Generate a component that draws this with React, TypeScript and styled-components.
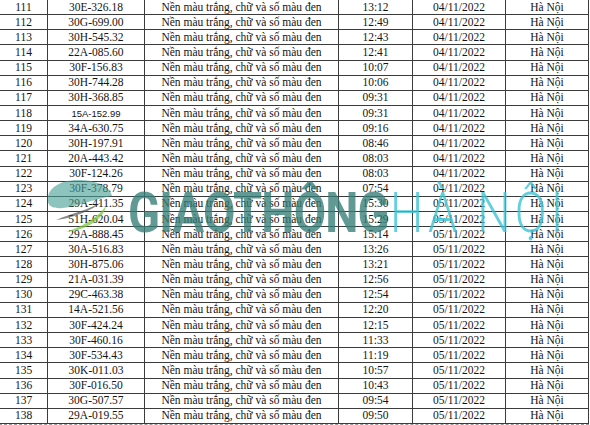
import React from "react";
import styled, { createGlobalStyle } from "styled-components";

const GlobalStyle = createGlobalStyle`
  html, body {
    margin: 0;
    padding: 0;
    background: #ffffff;
  }
  body {
    font-family: "Liberation Serif", "Times New Roman", serif;
    color: #141414;
    overflow: hidden;
  }
`;

const Page = styled.div`
  position: relative;
  width: 590px;
  height: 425px;
  overflow: hidden;
`;

const Sheet = styled.div`
  width: 589px;
  margin: -1px 0 0 -1px;
  border-right: 1px dashed #9a9a9a;
  border-bottom: 1px dashed #9a9a9a;
`;

const Table = styled.table`
  width: 589px;
  border-collapse: collapse;
  table-layout: fixed;
`;

const Row = styled.tr`
  height: 15.15px;
`;

const Cell = styled.td<{ $sans?: boolean }>`
  border: 1px solid #3b3b3b;
  padding: 0;
  text-align: center;
  vertical-align: middle;
  white-space: nowrap;
  font-size: ${(p) => (p.$sans ? "9.5px" : "11.5px")};
  font-family: ${(p) =>
    p.$sans ? '"Liberation Sans", Arial, sans-serif' : '"Liberation Serif", "Times New Roman", serif'};
  line-height: 13px;
  overflow: hidden;
`;

const Watermark = styled.div`
  position: absolute;
  left: 44px;
  top: 172px;
  display: flex;
  align-items: flex-start;
  pointer-events: none;
`;

const Logo = styled.svg`
  width: 80px;
  height: 66px;
  flex: none;
  opacity: 0.85;
`;

const Brand = styled.span`
  display: inline-block;
  margin: 8px 0 0 4px;
  white-space: nowrap;
  font-family: Roboto, "Liberation Sans", sans-serif;
  font-weight: 700;
  font-size: 56px;
  line-height: 66px;
  color: rgba(52, 125, 118, 0.78);
  transform: scaleX(0.84);
  transform-origin: left center;
  letter-spacing: -1px;
`;

const City = styled.span`
  position: absolute;
  left: 346px;
  top: 8px;
  white-space: nowrap;
  font-family: Roboto, "Liberation Sans", sans-serif;
  font-weight: 300;
  font-size: 56px;
  line-height: 66px;
  color: rgba(62, 196, 212, 0.8);
  transform: scaleX(0.84);
  transform-origin: left center;
  letter-spacing: 5px;
`;

type Plate = {
  no: number;
  plate: string;
  time: string;
  date: string;
  sans?: boolean;
};

const rows: Plate[] = [
  { no: 111, plate: "30E-326.18", time: "13:12", date: "04/11/2022" },
  { no: 112, plate: "30G-699.00", time: "12:49", date: "04/11/2022" },
  { no: 113, plate: "30H-545.32", time: "12:43", date: "04/11/2022" },
  { no: 114, plate: "22A-085.60", time: "12:41", date: "04/11/2022" },
  { no: 115, plate: "30F-156.83", time: "10:07", date: "04/11/2022" },
  { no: 116, plate: "30H-744.28", time: "10:06", date: "04/11/2022" },
  { no: 117, plate: "30H-368.85", time: "09:31", date: "04/11/2022" },
  { no: 118, plate: "15A-152.99", time: "09:31", date: "04/11/2022", sans: true },
  { no: 119, plate: "34A-630.75", time: "09:16", date: "04/11/2022" },
  { no: 120, plate: "30H-197.91", time: "08:46", date: "04/11/2022" },
  { no: 121, plate: "20A-443.42", time: "08:03", date: "04/11/2022" },
  { no: 122, plate: "30F-124.26", time: "08:03", date: "04/11/2022" },
  { no: 123, plate: "30F-378.79", time: "07:54", date: "04/11/2022" },
  { no: 124, plate: "29A-411.35", time: "15:30", date: "05/11/2022" },
  { no: 125, plate: "51H-620.04", time: "15:29", date: "05/11/2022" },
  { no: 126, plate: "29A-888.45", time: "15:14", date: "05/11/2022" },
  { no: 127, plate: "30A-516.83", time: "13:26", date: "05/11/2022" },
  { no: 128, plate: "30H-875.06", time: "13:21", date: "05/11/2022" },
  { no: 129, plate: "21A-031.39", time: "12:56", date: "05/11/2022" },
  { no: 130, plate: "29C-463.38", time: "12:54", date: "05/11/2022" },
  { no: 131, plate: "14A-521.56", time: "12:20", date: "05/11/2022" },
  { no: 132, plate: "30F-424.24", time: "12:15", date: "05/11/2022" },
  { no: 133, plate: "30F-460.16", time: "11:33", date: "05/11/2022" },
  { no: 134, plate: "30F-534.43", time: "11:19", date: "05/11/2022" },
  { no: 135, plate: "30K-011.03", time: "10:57", date: "05/11/2022" },
  { no: 136, plate: "30F-016.50", time: "10:43", date: "05/11/2022" },
  { no: 137, plate: "30G-507.57", time: "09:54", date: "05/11/2022" },
  { no: 138, plate: "29A-019.55", time: "09:50", date: "05/11/2022" },
];

const colWidths = [48, 97, 194, 74, 93, 83];

export default function App() {
  return (
    <>
      <GlobalStyle />
      <Page>
        <Sheet>
          <Table>
            <colgroup>
              {colWidths.map((w, i) => (
                <col key={i} style={{ width: w }} />
              ))}
            </colgroup>
            <tbody>
              {rows.map((r) => (
                <Row key={r.no}>
                  <Cell>{r.no}</Cell>
                  <Cell $sans={r.sans}>{r.plate}</Cell>
                  <Cell>Nền màu trắng, chữ và số màu đen</Cell>
                  <Cell>{r.time}</Cell>
                  <Cell>{r.date}</Cell>
                  <Cell>Hà Nội</Cell>
                </Row>
              ))}
            </tbody>
          </Table>
        </Sheet>

        <Watermark>
          <Logo viewBox="0 0 80 66">
            {/* teal dome */}
            <path
              d="M4 30 C2 18 14 8 34 8 C52 8 66 14 68 24 C58 26 44 30 30 34 C18 37 6 38 4 30 Z"
              fill="rgba(70,160,150,0.72)"
            />
            {/* dark swoosh */}
            <path
              d="M12 48 C26 42 44 38 58 30 C48 38 30 46 12 48 Z"
              fill="rgba(80,80,80,0.8)"
            />
            {/* green swoosh */}
            <path
              d="M22 60 C34 56 52 48 62 34 C60 46 44 58 22 60 Z"
              fill="rgba(120,200,60,0.85)"
            />
          </Logo>
          <Brand>GIAOTHÔNG</Brand>
          <City>HÀ NỘI</City>
        </Watermark>
      </Page>
    </>
  );
}
